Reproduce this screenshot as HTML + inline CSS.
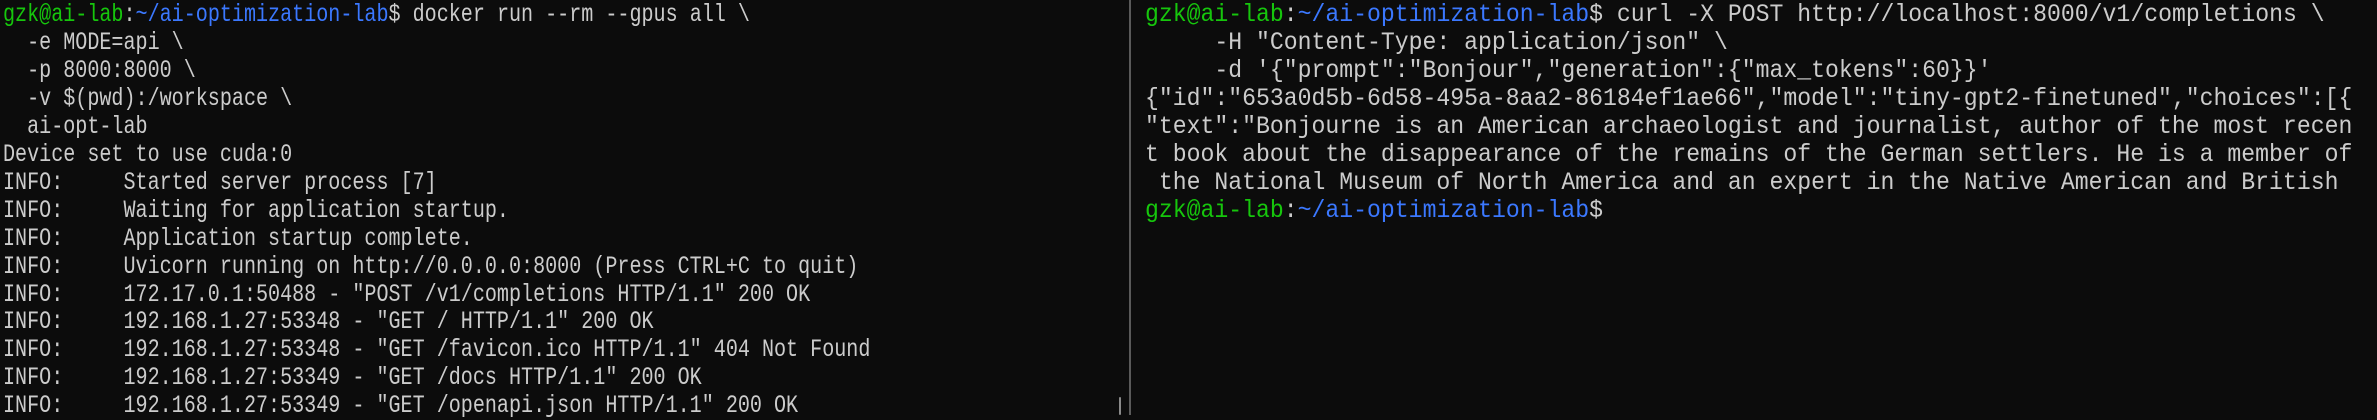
<!DOCTYPE html>
<html><head><meta charset="utf-8"><style>
html,body{margin:0;padding:0;background:#0c0c0c;width:2377px;height:415px;overflow:hidden}
.p{position:absolute;top:1px;font-family:"Liberation Mono",monospace;font-size:25px;line-height:27.95px;color:#cccccc;white-space:pre;margin:0;transform-origin:0 0}
.g{color:#16c60c}.b{color:#3b78ff}
#l{left:3px;transform:scaleX(0.803)}
#r{left:1145px;transform:scaleX(0.925)}
#div{position:absolute;left:1129px;top:0;width:2px;height:415px;background:#5a5a5a}
#sb{position:absolute;left:1119px;top:397px;width:2px;height:18px;background:#8a8a8a;border-radius:1px}
</style></head><body>
<pre class="p" id="l"><span class="g">gzk@ai-lab</span>:<span class="b">~/ai-optimization-lab</span>$ docker run --rm --gpus all \
  -e MODE=api \
  -p 8000:8000 \
  -v $(pwd):/workspace \
  ai-opt-lab
Device set to use cuda:0
INFO:     Started server process [7]
INFO:     Waiting for application startup.
INFO:     Application startup complete.
INFO:     Uvicorn running on http://0.0.0.0:8000 (Press CTRL+C to quit)
INFO:     172.17.0.1:50488 - "POST /v1/completions HTTP/1.1" 200 OK
INFO:     192.168.1.27:53348 - "GET / HTTP/1.1" 200 OK
INFO:     192.168.1.27:53348 - "GET /favicon.ico HTTP/1.1" 404 Not Found
INFO:     192.168.1.27:53349 - "GET /docs HTTP/1.1" 200 OK
INFO:     192.168.1.27:53349 - "GET /openapi.json HTTP/1.1" 200 OK</pre>
<div id="sb"></div>
<div id="div"></div>
<pre class="p" id="r"><span class="g">gzk@ai-lab</span>:<span class="b">~/ai-optimization-lab</span>$ curl -X POST http://localhost:8000/v1/completions \
     -H "Content-Type: application/json" \
     -d '{"prompt":"Bonjour","generation":{"max_tokens":60}}'
{"id":"653a0d5b-6d58-495a-8aa2-86184ef1ae66","model":"tiny-gpt2-finetuned","choices":[{
"text":"Bonjourne is an American archaeologist and journalist, author of the most recen
t book about the disappearance of the remains of the German settlers. He is a member of
 the National Museum of North America and an expert in the Native American and British
<span class="g">gzk@ai-lab</span>:<span class="b">~/ai-optimization-lab</span>$</pre>
</body></html>
